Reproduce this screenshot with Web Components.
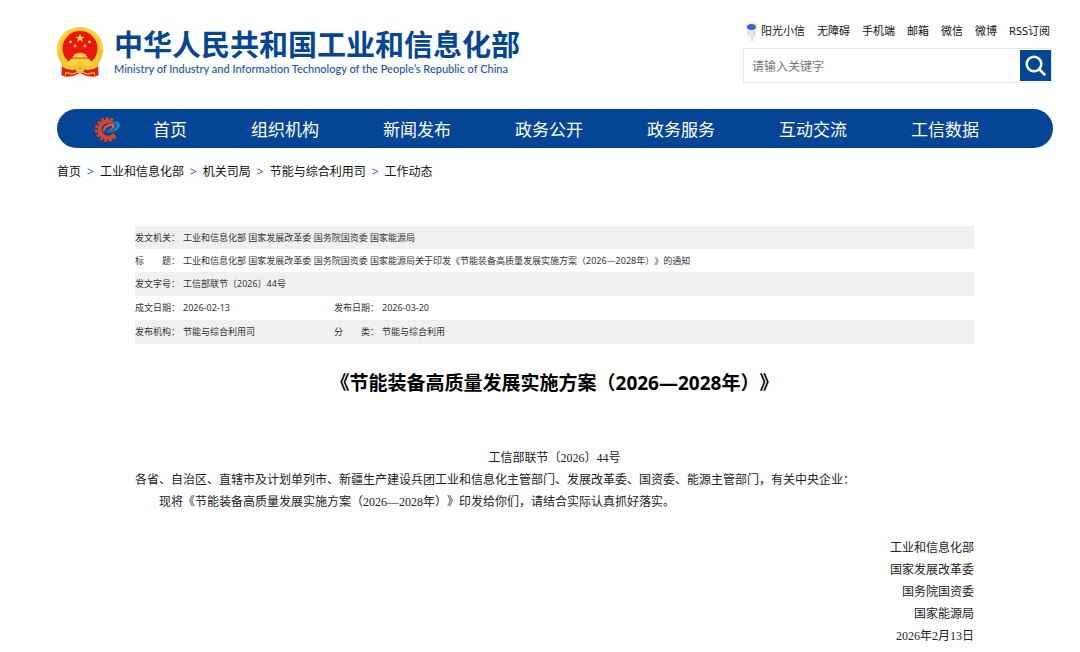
<!DOCTYPE html>
<html lang="zh-CN">
<head>
<meta charset="utf-8">
<meta name="viewport" content="width=device-width, initial-scale=1">
<title>《节能装备高质量发展实施方案（2026—2028年）》</title>
<style>
  :root {
    --brand: #044695;
    --stripe: #f0f0f0;
    --sans: "Noto Sans", "Noto Sans CJK SC", sans-serif;
    --song: "Liberation Serif", "Noto Sans CJK SC", serif;
  }
  body { margin: 0; background: #fff; color: #222; font-family: var(--sans); text-spacing-trim: space-all; }
</style>
</head>
<body>
<miit-page>
  <site-header slot="header"></site-header>
  <site-nav slot="nav"></site-nav>
  <bread-crumbs slot="crumbs">
    <a href="#home">首页</a>
    <a href="#miit">工业和信息化部</a>
    <a href="#departments">机关司局</a>
    <a href="#energy">节能与综合利用司</a>
    <a href="#news">工作动态</a>
  </bread-crumbs>
  <doc-meta></doc-meta>
  <doc-article>
    <span slot="title">《节能装备高质量发展实施方案（2026—2028年）》</span>
    <span slot="number">工信部联节〔2026〕44号</span>
    <span slot="to">各省、自治区、直辖市及计划单列市、新疆生产建设兵团工业和信息化主管部门、发展改革委、国资委、能源主管部门，有关中央企业：</span>
    <span slot="text">现将《节能装备高质量发展实施方案（2026—2028年）》印发给你们，请结合实际认真抓好落实。</span>
    <div slot="sign">工业和信息化部</div>
    <div slot="sign">国家发展改革委</div>
    <div slot="sign">国务院国资委</div>
    <div slot="sign">国家能源局</div>
    <div slot="sign">2026年2月13日</div>
  </doc-article>
</miit-page>

<script>
const define = (name, html) => customElements.define(name, class extends HTMLElement {
  constructor() {
    super();
    this.attachShadow({ mode: "open" }).innerHTML = html;
  }
});

define("miit-page", `
  <style>
    :host { display: block; padding: 20px 28px 4px 57px; }
    main { padding: 0 78px; }
  </style>
  <slot name="header"></slot>
  <slot name="nav"></slot>
  <slot name="crumbs"></slot>
  <main><slot></slot></main>
`);

define("national-emblem", `
  <style>:host { display: block; } svg { display: block; }</style>
  <svg width="46" height="51" viewBox="0 0 46 51" role="img" aria-label="国徽">
    <path d="M5 34 4.500 48l4 2 8-1 6.500-3 6.500 3 8 1 4-2L41 34z" fill="#e21c16"/>
    <path d="M23 0C36 0 46 10 46 22.500c0 8-4 14-8 18L23 43 8 40.500C4 36.500 0 30.500 0 22.500 0 10 10 0 23 0z" fill="#f0c630"/>
    <path d="M1.500 22.500C1.500 10.500 11 1.500 23 1.500S44.500 10.500 44.500 22.500" fill="none" stroke="#f8db58" stroke-width="1.500"/>
    <circle cx="23" cy="21.500" r="17.500" fill="#e91712"/>
    <path d="M23 6.500l1.200 3.200h3.400l-2.700 2.100 1 3.300-2.900-2-2.900 2 1-3.300-2.700-2.100h3.400z" fill="#fbd94a"/>
    <g fill="#fbd03d">
      <circle cx="13.500" cy="15" r="1.400"/><circle cx="18" cy="19" r="1.400"/>
      <circle cx="28" cy="19" r="1.400"/><circle cx="32.500" cy="15" r="1.400"/>
      <path d="M17 27.500q6-3.500 12 0v1.500h2l-1.500 1.800h-13L15 29h2z"/>
      <path d="M14.500 31.500h17L36 36H10z"/>
      <path d="M9 36h28v2H9z"/>
    </g>
    <path d="M4 34q6 5 13 5l2.500-1.500h7L29 39q7 0 13-5l-1.500 6q-5 3.500-11 3l-6.500-3-6.500 3q-6 .5-11-3z" fill="#f4c637"/>
    <circle cx="23" cy="41.500" r="4.500" fill="#f3c535"/>
    <circle cx="23" cy="41.500" r="1.600" fill="#e8a924"/>
    <path d="M8 45.500 15.500 47l7.500-2.500 7.500 2.500 7.500-1.500" fill="none" stroke="#efb52b" stroke-width="1.300"/>
    <path d="M8.500 46v4M37.500 46v4" stroke="#efb52b"/>
  </svg>
`);

define("site-header", `
  <style>
    :host { display: flex; justify-content: space-between; align-items: flex-start; }
    .brand { display: flex; gap: 11px; padding-top: 7px; color: var(--brand); text-decoration: none; }
    .names { display: grid; grid-template-rows: 36px 15px; white-space: nowrap; }
    .cn { font-size: 29px; line-height: 36px; font-weight: 700; }
    .en { font: 500 11px/12px Lato, "Open Sans", sans-serif; color: #1c55a3; }
    .side { width: 309px; }
    .links { display: flex; justify-content: flex-end; gap: 12px; padding: 1px 2px 7px 0; }
    .links a { color: #111; text-decoration: none; font-size: 11px; line-height: 20px; white-space: nowrap; }
    .links .helper { display: flex; gap: 3px; align-items: center; }
    form { display: flex; height: 35px; box-sizing: border-box; border: 1px solid #e8e8e8; padding: 1px 0 1px 1px; margin: 0; }
    input { flex: 1; min-width: 0; border: 0; outline: 0; padding: 2px 7px 0; background: none; font: 12px/20px var(--sans); color: #333; }
    input::placeholder { color: #777; opacity: 1; }
    button { width: 31px; padding: 0; border: 0; background: var(--brand); display: grid; place-items: center; }
  </style>
  <a class="brand" href="#home">
    <national-emblem></national-emblem>
    <span class="names">
      <span class="cn">中华人民共和国工业和信息化部</span>
      <span class="en">Ministry of Industry and Information Technology of the People’s Republic of China</span>
    </span>
  </a>
  <div class="side">
    <div class="links">
      <a class="helper" href="#helper">
        <svg width="13" height="20" viewBox="0 0 13 20" aria-hidden="true">
          <circle cx="6.500" cy="6.500" r="5.500" fill="none" stroke="#f5d65b" stroke-dasharray="1.500 1.500"/>
          <path d="M3.500 8q3 2 6 0l1.500 5-2 1-.5 4h-3L4 14l-2-1z" fill="#dce9fa"/>
          <ellipse cx="6.500" cy="6" rx="4.500" ry="3" fill="#3565d7"/>
          <path d="M4 10l-2 4M9 10l1 5" stroke="#b9d1f2"/>
          <path d="M6 18h2v2H6z" fill="#f8df86"/>
        </svg>阳光小信</a>
      <a href="#access">无障碍</a>
      <a href="#mobile">手机端</a>
      <a href="#mail">邮箱</a>
      <a href="#wechat">微信</a>
      <a href="#weibo">微博</a>
      <a href="#rss">RSS订阅</a>
    </div>
    <form role="search">
      <input type="text" aria-label="请输入关键字" placeholder="请输入关键字">
      <button type="button" aria-label="搜索">
        <svg width="21" height="21" viewBox="0 0 21 21" fill="none" stroke="#fff" stroke-width="2.500" stroke-linecap="round" aria-hidden="true">
          <circle cx="9" cy="9" r="7.300"/><path d="M14.500 14.500 19.500 19.500"/>
        </svg>
      </button>
    </form>
  </div>
`);

define("site-nav", `
  <style>
    :host { display: block; margin-top: 26px; }
    nav { display: flex; align-items: center; gap: 64px; height: 37px; padding: 2px 0 0 37px; border-radius: 20px; background: var(--brand); margin-right: -1px; }
    a { color: #fff; text-decoration: none; font-size: 17px; line-height: 24px; white-space: nowrap; }
    .mark { display: flex; margin-right: -32px; }
  </style>
  <nav aria-label="主导航">
    <a class="mark" href="#home" aria-label="工业和信息化部">
      <svg width="27" height="26" viewBox="0 0 27 26" aria-hidden="true">
        <g fill="none" stroke="#e3461d">
          <path d="M19 3.200A11 11 0 1 0 22.500 18.500" stroke-width="2.600" stroke-dasharray="2.700 2"/>
          <path d="M17.500 5A8.300 8.300 0 1 0 20.500 17.500" stroke-width="4"/>
        </g>
        <path d="M9.500 16C7.500 10 13 6.500 18 6.600c5 .3 4.500 6.200-7 8.400 5.500-2.500 8-4.500 7-5.700-1.500-1.200-7 .7-8.500 6.700z" fill="#ee5a2c"/>
        <path d="M16 6.300c4.500-2.800 10-2 10 1.700 0 4.500-7 8.200-15 7.500 7-1.200 12-4.200 11.500-7-.3-1.800-3.500-2.200-6.500-2.200z" fill="#1687cf"/>
      </svg>
    </a>
    <a href="#index">首页</a>
    <a href="#org">组织机构</a>
    <a href="#news">新闻发布</a>
    <a href="#open">政务公开</a>
    <a href="#service">政务服务</a>
    <a href="#interact">互动交流</a>
    <a href="#data">工信数据</a>
  </nav>
`);

define("bread-crumbs", `
  <style>
    :host { display: block; padding-top: 14px; font-size: 12px; line-height: 20px; }
    nav { display: flex; gap: 6px; }
    a { color: #111; text-decoration: none; }
    span { color: #2c61aa; }
  </style>
  <nav aria-label="当前位置"></nav>
`);
document.querySelectorAll("bread-crumbs").forEach(host => {
  const nav = host.shadowRoot.querySelector("nav");
  [...host.querySelectorAll("a")].forEach((link, i) => {
    if (i) {
      const mark = document.createElement("span");
      mark.textContent = ">";
      nav.append(mark);
    }
    nav.append(link);
  });
});

define("doc-meta", `
  <style>
    :host { display: block; padding-top: 44px; }
    table { width: 100%; border-collapse: collapse; table-layout: fixed; font-size: 9px; line-height: 15px; color: #333; }
    th, td { padding: 4px 0; text-align: left; font-weight: 400; white-space: nowrap; }
    tr:nth-child(n+3) th, tr:nth-child(n+3) td { padding-bottom: 5px; }
    tr:nth-child(odd) { background: var(--stripe); }
    .label { width: 48px; }
    .value { width: 151px; }
  </style>
  <table>
    <colgroup><col class="label"><col class="value"><col class="label"><col></colgroup>
    <tbody>
      <tr><th scope="row">发文机关：</th><td colspan="3">工业和信息化部 国家发展改革委 国务院国资委 国家能源局</td></tr>
      <tr><th scope="row">标　　题：</th><td colspan="3">工业和信息化部 国家发展改革委 国务院国资委 国家能源局关于印发《节能装备高质量发展实施方案（2026—2028年）》的通知</td></tr>
      <tr><th scope="row">发文字号：</th><td colspan="3">工信部联节〔2026〕44号</td></tr>
      <tr><th scope="row">成文日期：</th><td>2026-02-13</td><th scope="row">发布日期：</th><td>2026-03-20</td></tr>
      <tr><th scope="row">发布机构：</th><td>节能与综合利用司</td><th scope="row">分　　类：</th><td>节能与综合利用</td></tr>
    </tbody>
  </table>
`);

define("doc-article", `
  <style>
    :host { display: block; padding-top: 24px; }
    h1 { margin: 0 0 49px; font-size: 19px; line-height: 30px; font-weight: 700; color: #000; text-align: center; }
    .body { font-family: var(--song); font-size: 12px; line-height: 22px; }
    p { margin: 0; }
    .number { text-align: center; }
    .text { text-indent: 2em; }
    .sign { margin-top: 24px; text-align: right; }
  </style>
  <article>
    <h1><slot name="title"></slot></h1>
    <div class="body">
      <p class="number"><slot name="number"></slot></p>
      <p><slot name="to"></slot></p>
      <p class="text"><slot name="text"></slot></p>
      <div class="sign"><slot name="sign"></slot></div>
    </div>
  </article>
`);
</script>
</body>
</html>
